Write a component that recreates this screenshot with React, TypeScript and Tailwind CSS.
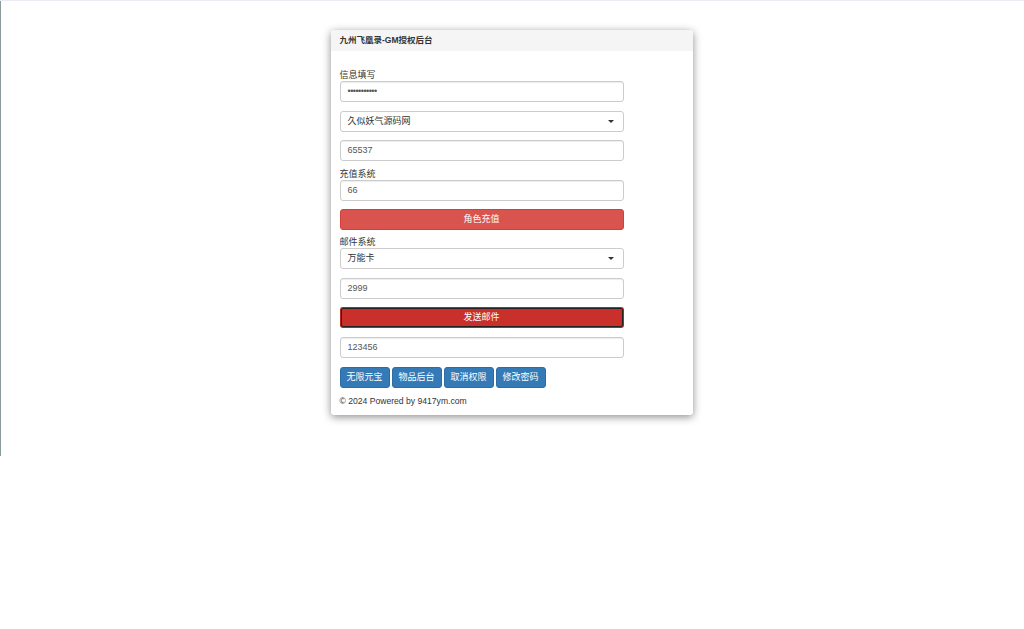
import { useState } from "react";

const font = { fontFamily: '"Liberation Sans", "Noto Sans CJK SC", sans-serif' };

function Caret() {
    return <span className="w-0 h-0 border-l-[3px] border-r-[3px] border-t-[3px] border-l-transparent border-r-transparent border-t-[#333]" />;
}

function Field(props: { value: string; className?: string }) {
    return (
        <div className={"w-[284px] h-[21px] border border-[#ccc] rounded-[3px] bg-white flex items-center px-[7px] text-[9px] text-[#555] shadow-[inset_0_1px_1px_rgba(0,0,0,0.075)] " + (props.className ?? "")}>
            {props.value}
        </div>
    );
}

function Select(props: { value: string; className?: string }) {
    return (
        <div className={"w-[284px] h-[21px] border border-[#ccc] rounded-[3px] bg-white flex items-center justify-between pl-[7px] pr-[9px] text-[9px] text-[#333] " + (props.className ?? "")}>
            <span>{props.value}</span>
            <Caret />
        </div>
    );
}

export default function App() {
    const [tabs] = useState(["无限元宝", "物品后台", "取消权限", "修改密码"]);

    return (
        <div className="w-full h-[629px] bg-white flex border-t border-t-[#ecebf5]" style={font}>
            <div className="w-px h-[455px] bg-[#8b9a9a] shrink-0" />
            <div className="flex-1 flex justify-center pt-[29px]">
                <div className="w-[362px] h-[385px] bg-white rounded-[3px] shadow-[0_2px_8px_rgba(0,0,0,0.45)] flex flex-col -translate-x-[1px]">
                    {/* 헤더 */}
                    <div className="h-[21px] bg-[#f5f5f5] rounded-t-[3px] flex items-center px-[9px] text-[8.5px] font-bold text-[#333]">
                        九州飞凰录-GM授权后台
                    </div>

                    <div className="px-[9px] pt-[19px] flex flex-col text-[9px] text-[#333]">
                        <div className="h-[11px] leading-[11px]">信息填写</div>
                        <Field value="•••••••••••" className="text-[7px] tracking-[-0.5px]" />
                        <Select value="久似妖气源码网" className="mt-[9px]" />
                        <Field value="65537" className="mt-[8px]" />

                        <div className="h-[11px] leading-[11px] mt-[8px]">充值系统</div>
                        <Field value="66" />
                        <div className="w-[284px] h-[21px] mt-[8px] rounded-[3px] bg-[#d9534f] border border-[#d43f3a] flex items-center justify-center text-white">角色充值</div>

                        <div className="h-[11px] leading-[11px] mt-[7px]">邮件系统</div>
                        <Select value="万能卡" />
                        <Field value="2999" className="mt-[9px]" />
                        <div className="w-[284px] h-[21px] mt-[8px] rounded-[3px] bg-[#ac2925] p-px">
                            <div className="w-full h-full border border-[#222] rounded-[2px] bg-[#c9302c] flex items-center justify-center text-white">发送邮件</div>
                        </div>
                        <Field value="123456" className="mt-[9px]" />

                        <div className="flex gap-[2px] mt-[9px]">
                            {tabs.map((t) => (
                                <div key={t} className="w-[50px] h-[21px] rounded-[3px] bg-[#337ab7] border border-[#2e6da4] flex items-center justify-center text-white text-[9px]">{t}</div>
                            ))}
                        </div>

                        <div className="mt-[8px] h-[11px] leading-[11px] text-[8.6px] text-[#333]">© 2024 Powered by 9417ym.com</div>
                    </div>
                </div>
            </div>
        </div>
    );
}
